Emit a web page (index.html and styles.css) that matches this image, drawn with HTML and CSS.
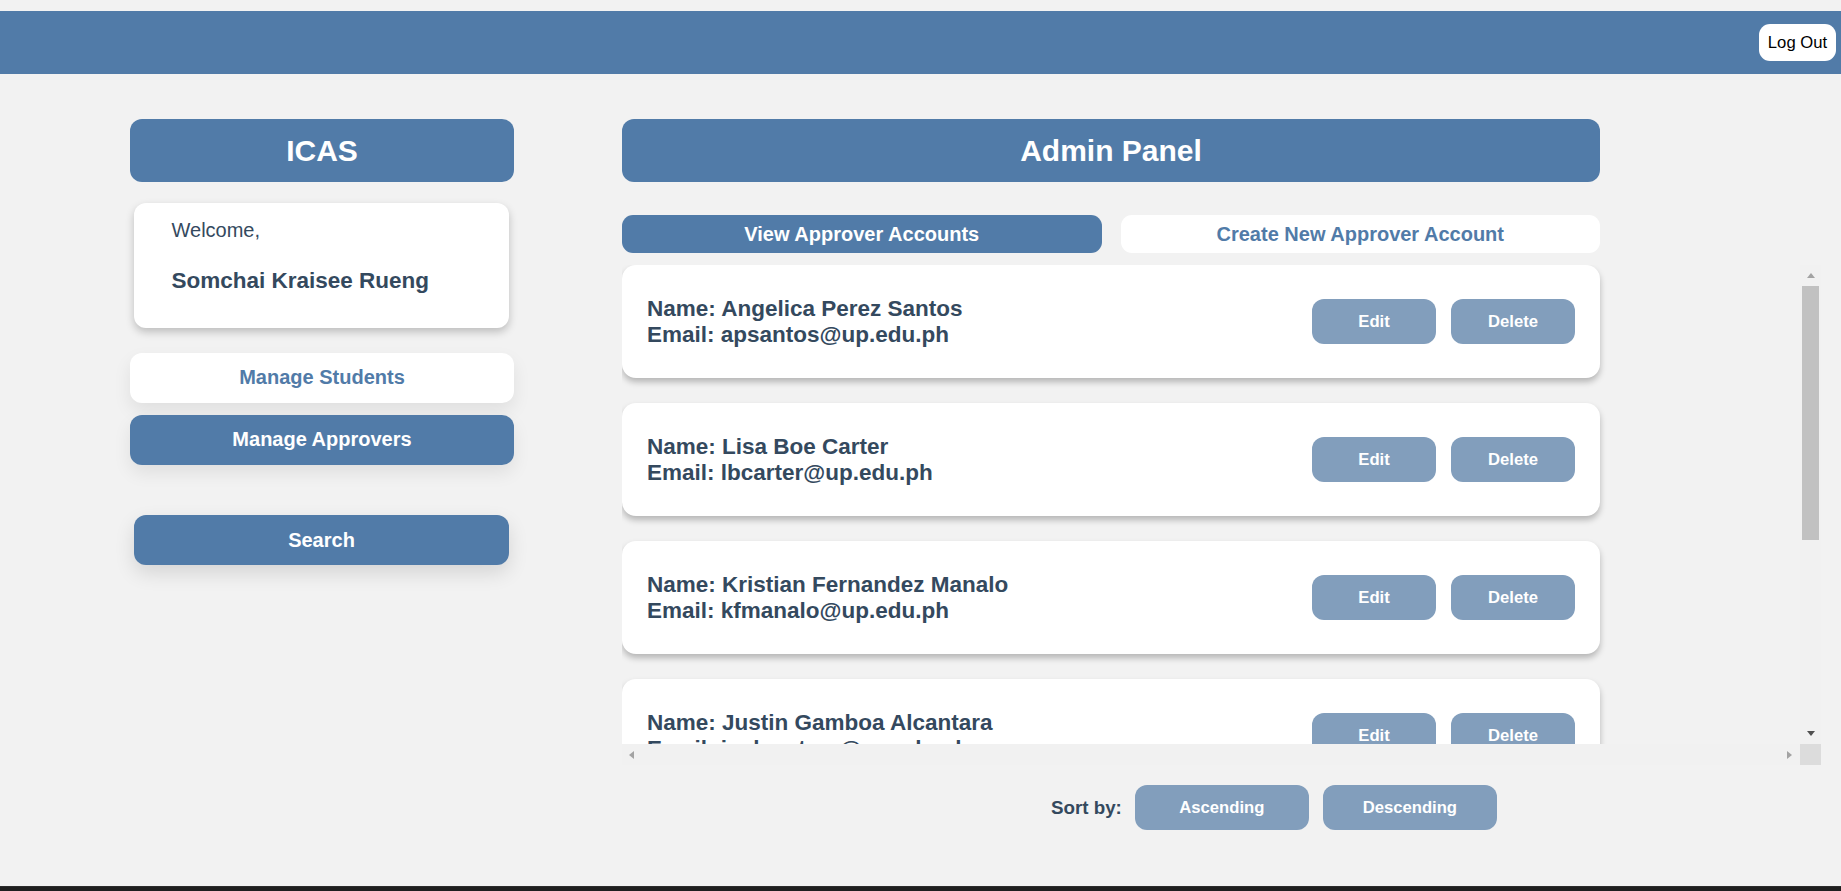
FILE: index.html
```html
<!DOCTYPE html>
<html lang="en">
<head>
<meta charset="utf-8">
<title>ICAS Admin Panel</title>
<link rel="stylesheet" href="styles.css">
</head>
<body>
<header class="topbar">
  <button class="logout">Log Out</button>
</header>
<main class="main">
  <aside class="sidebar">
    <div class="brand">ICAS</div>
    <div class="welcome">
      <p class="welcome-label">Welcome,</p>
      <p class="welcome-name">Somchai Kraisee Rueng</p>
    </div>
    <button class="nav-btn nav-light">Manage Students</button>
    <button class="nav-btn nav-active">Manage Approvers</button>
    <button class="search-btn">Search</button>
  </aside>
  <section class="content">
    <div class="panel-title">Admin Panel</div>
    <div class="tabs">
      <button class="tab tab-active">View Approver Accounts</button>
      <button class="tab">Create New Approver Account</button>
    </div>
    <div class="list-frame">
      <div class="list">
        <div class="card">
          <div class="card-info">
            <div>Name: Angelica Perez Santos</div>
            <div>Email: apsantos@up.edu.ph</div>
          </div>
          <div class="card-actions">
            <button class="soft-btn">Edit</button>
            <button class="soft-btn">Delete</button>
          </div>
        </div>
        <div class="card">
          <div class="card-info">
            <div>Name: Lisa Boe Carter</div>
            <div>Email: lbcarter@up.edu.ph</div>
          </div>
          <div class="card-actions">
            <button class="soft-btn">Edit</button>
            <button class="soft-btn">Delete</button>
          </div>
        </div>
        <div class="card">
          <div class="card-info">
            <div>Name: Kristian Fernandez Manalo</div>
            <div>Email: kfmanalo@up.edu.ph</div>
          </div>
          <div class="card-actions">
            <button class="soft-btn">Edit</button>
            <button class="soft-btn">Delete</button>
          </div>
        </div>
        <div class="card">
          <div class="card-info">
            <div>Name: Justin Gamboa Alcantara</div>
            <div>Email: jgalcantara@up.edu.ph</div>
          </div>
          <div class="card-actions">
            <button class="soft-btn">Edit</button>
            <button class="soft-btn">Delete</button>
          </div>
        </div>
        <div class="card">
          <div class="card-info">
            <div>Name: Maria Cruz Dela Rosa</div>
            <div>Email: mcdelarosa@up.edu.ph</div>
          </div>
          <div class="card-actions">
            <button class="soft-btn">Edit</button>
            <button class="soft-btn">Delete</button>
          </div>
        </div>
        <div class="card">
          <div class="card-info">
            <div>Name: Paolo Reyes Villanueva</div>
            <div>Email: prvillanueva@up.edu.ph</div>
          </div>
          <div class="card-actions">
            <button class="soft-btn">Edit</button>
            <button class="soft-btn">Delete</button>
          </div>
        </div>
      </div>
      <div class="vscroll" aria-hidden="true">
        <div class="sb-btn"><span class="arrow arrow-up"></span></div>
        <div class="vtrack"><div class="vthumb"></div></div>
        <div class="sb-btn"><span class="arrow arrow-down"></span></div>
      </div>
      <div class="hscroll" aria-hidden="true">
        <div class="sb-btn"><span class="arrow arrow-left"></span></div>
        <div class="htrack"></div>
        <div class="sb-btn"><span class="arrow arrow-right"></span></div>
      </div>
      <div class="sb-corner"></div>
    </div>
    <div class="sort">
      <span class="sort-label">Sort by:</span>
      <button class="soft-btn sort-btn">Ascending</button>
      <button class="soft-btn sort-btn">Descending</button>
    </div>
  </section>
</main>
<footer class="footer"></footer>
</body>
</html>
```
FILE: styles.css
```css
* { box-sizing: border-box; }

html, body { height: 100%; }

body {
  margin: 0;
  background: #f2f2f2;
  font-family: "Liberation Sans", Arial, sans-serif;
  display: flex;
  flex-direction: column;
  min-height: 100vh;
  overflow: hidden;
}

button {
  font-family: "Liberation Sans", Arial, sans-serif;
  border: none;
  cursor: pointer;
  padding: 0;
}

.topbar {
  margin-top: 11px;
  height: 63px;
  background: #517ba8;
  display: flex;
  justify-content: flex-end;
  align-items: center;
  padding-right: 5px;
  flex-shrink: 0;
}

.logout {
  width: 77px;
  height: 37px;
  background: #fff;
  color: #000;
  border-radius: 11px;
  font-size: 16.67px;
}

.main {
  display: flex;
  padding-left: 130px;
  padding-top: 45px;
  gap: 108px;
}

.sidebar {
  width: 384px;
  display: flex;
  flex-direction: column;
}

.brand {
  height: 63px;
  border-radius: 12px;
  background: #517ba8;
  color: #fff;
  font-weight: bold;
  font-size: 30px;
  display: flex;
  align-items: center;
  justify-content: center;
}

.welcome {
  margin: 21px 5px 0 4px;
  padding: 16px 37.5px 34px;
  background: #fff;
  border-radius: 12px;
  box-shadow: 0 4px 8px rgba(0, 0, 0, 0.22);
  color: #34495e;
}

.welcome-label {
  margin: 0;
  font-size: 20px;
  line-height: 23px;
}

.welcome-name {
  margin: 26px 0 0;
  font-size: 22.5px;
  line-height: 26px;
  font-weight: bold;
}

.nav-btn {
  height: 50px;
  border-radius: 12px;
  font-size: 20px;
  font-weight: bold;
  box-shadow: 0 8px 18px rgba(0, 0, 0, 0.08);
  padding-bottom: 2px;
}

.nav-light {
  margin-top: 25px;
  background: #fff;
  color: #517ba8;
}

.nav-active {
  margin-top: 12px;
  background: #517ba8;
  color: #fff;
}

.search-btn {
  margin: 50px 5px 0 4px;
  height: 50px;
  border-radius: 12px;
  background: #517ba8;
  color: #fff;
  font-size: 20px;
  font-weight: bold;
  box-shadow: 0 8px 20px rgba(0, 0, 0, 0.12);
}

.content {
  display: flex;
  flex-direction: column;
  width: 1199px;
}

.panel-title {
  width: 978px;
  height: 63px;
  border-radius: 12px;
  background: #517ba8;
  color: #fff;
  font-weight: bold;
  font-size: 30px;
  display: flex;
  align-items: center;
  justify-content: center;
}

.tabs {
  margin-top: 33px;
  width: 978px;
  display: flex;
  gap: 19px;
}

.tab {
  flex: 1;
  height: 38px;
  border-radius: 11px;
  background: #fff;
  color: #517ba8;
  font-size: 20px;
  font-weight: bold;
}

.tab-active {
  background: #517ba8;
  color: #fff;
}

/* scroll frame with its scrollbars */
.list-frame {
  margin-top: 12px;
  width: 1199px;
  display: grid;
  grid-template-columns: 1178px 21px;
  grid-template-rows: 479px 21px;
}

.list {
  overflow: hidden;
}

.card {
  width: 978px;
  padding: 31px 25px;
  margin-bottom: 25px;
  background: #fff;
  border-radius: 14px;
  box-shadow: 0 4px 6px rgba(0, 0, 0, 0.25);
  display: flex;
  justify-content: space-between;
  align-items: center;
}

.card-info {
  font-size: 22.5px;
  line-height: 25.5px;
  font-weight: bold;
  color: #34495e;
}

.card-actions {
  display: flex;
  gap: 15px;
}

.soft-btn {
  width: 124px;
  height: 45px;
  border-radius: 12px;
  background: #829ebc;
  color: #fff;
  font-size: 16.67px;
  font-weight: bold;
}

.vscroll {
  background: #f1f1f1;
  display: flex;
  flex-direction: column;
}

.hscroll {
  background: #f1f1f1;
  display: flex;
}

.sb-btn {
  width: 21px;
  height: 21px;
  flex-shrink: 0;
  display: flex;
  align-items: center;
  justify-content: center;
}

.vtrack {
  flex: 1;
  padding: 0 2px;
}

.vthumb {
  height: 254px;
  background: #c1c1c1;
}

.htrack {
  flex: 1;
}

.arrow {
  width: 0;
  height: 0;
  border-style: solid;
  border-color: transparent;
}

.arrow-up {
  border-width: 0 4.5px 5px;
  border-bottom-color: #a3a3a3;
  margin-top: -1px;
}

.arrow-down {
  border-width: 5px 4.5px 0;
  border-top-color: #505050;
  margin-top: -1px;
}

.arrow-left {
  border-width: 4.5px 5px 4.5px 0;
  border-right-color: #a3a3a3;
  margin-left: -2px;
}

.arrow-right {
  border-width: 4.5px 0 4.5px 5px;
  border-left-color: #a3a3a3;
}

.sb-corner {
  background: #dcdcdc;
}

.sort {
  margin-top: 20px;
  margin-left: 429px;
  display: flex;
  align-items: center;
}

.sort-label {
  font-size: 18.75px;
  font-weight: bold;
  color: #34495e;
  margin-right: 13px;
}

.sort-btn {
  width: 174px;
  margin-right: 14px;
}

.footer {
  margin-top: auto;
  height: 5px;
  background: #1f1f1f;
  border-top: 1px solid #2c2c2c;
  flex-shrink: 0;
}
```
